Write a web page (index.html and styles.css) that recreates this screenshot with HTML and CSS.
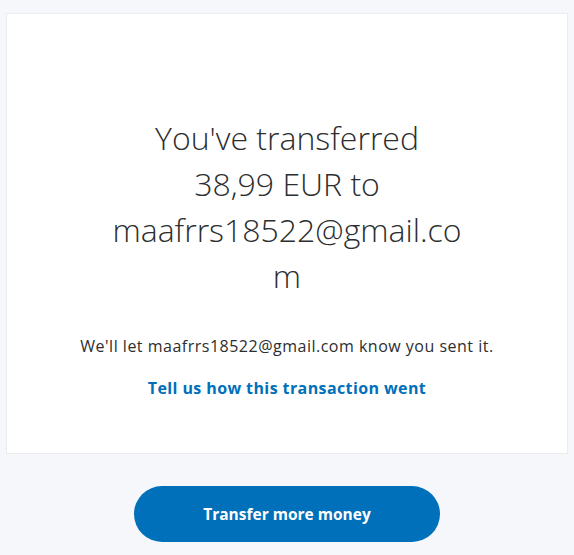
FILE: index.html
```html
<!DOCTYPE html>
<html lang="en">
<head>
  <meta charset="UTF-8" />
  <meta name="viewport" content="width=device-width, initial-scale=1" />
  <title>Transfer sent</title>
  <link rel="stylesheet" href="styles.css">
</head>
<body>

  <div class="page">
    <div class="done-card">
      <h1 class="done-title">You've transferred 38,99&nbsp;EUR to maafrrs18522@gmail.com</h1>
      <p class="done-note">We'll let maafrrs18522@gmail.com know you sent it.</p>
      <a class="done-link" href="#">Tell us how this transaction went</a>
    </div>

    <div class="actions">
      <button type="button" class="btn-primary">Transfer more money</button>
    </div>
  </div>

</body>
</html>
```

FILE: styles.css
```css
* {
  box-sizing: border-box;
}

body {
  margin: 0;
  background: #f5f7fa;
  font-family: 'Open Sans', 'Noto Sans', sans-serif;
  color: #2c2e2f;
}

.page {
  padding: 13px 6px 0;
}

.done-card {
  background: #ffffff;
  border: 1px solid #eaecef;
  height: 441px;
  padding: 101px 20px 0;
  display: flex;
  flex-direction: column;
  align-items: center;
  text-align: center;
}

.done-title {
  margin: 0;
  max-width: 360px;
  font-size: 32px;
  font-weight: 300;
  line-height: 46px;
  overflow-wrap: anywhere;
}

.done-note {
  margin: 36px 0 0;
  font-size: 16px;
  letter-spacing: 0.5px;
  line-height: 22px;
}

.done-link {
  margin-top: 20px;
  font-size: 16px;
  font-weight: 700;
  letter-spacing: 0.4px;
  color: #0070ba;
  text-decoration: none;
}

.actions {
  display: flex;
  justify-content: center;
  padding-top: 32px;
}

.btn-primary {
  width: 306px;
  height: 56px;
  border: none;
  border-radius: 28px;
  background: #0070ba;
  color: #ffffff;
  font-family: inherit;
  font-size: 15.5px;
  font-weight: 700;
  cursor: pointer;
}
```
